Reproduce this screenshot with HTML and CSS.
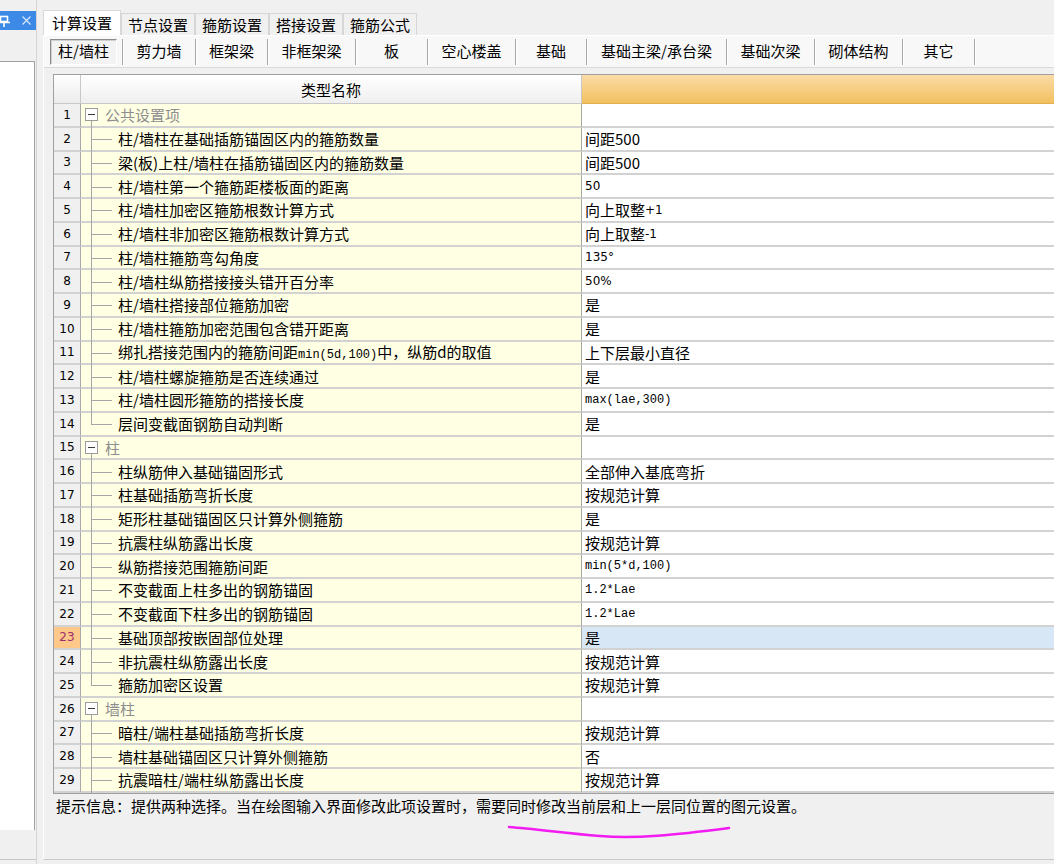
FILE: index.html
```html
<!DOCTYPE html>
<html lang="zh-CN">
<head>
<meta charset="utf-8">
<title>计算设置</title>
<link rel="stylesheet" href="styles.css">
</head>
<body>
<div class="app">
  <aside class="side">
    <div class="side-title">
      <svg class="pin" width="12" height="12" viewBox="0 0 12 12"><rect x="1.5" y="1.5" width="7" height="5" fill="none" stroke="#fff" stroke-width="1.6"/><path d="M0 7.5H11M5 7.5V12" stroke="#fff" stroke-width="1.6"/></svg>
      <svg class="close" width="9" height="9" viewBox="0 0 9 9"><path d="M0.5 0.5L8.5 8.5M8.5 0.5L0.5 8.5" stroke="#d6e6fb" stroke-width="1.2"/></svg>
    </div>
    <div class="side-gap"></div>
    <div class="side-list"></div>
    <div class="side-foot"></div>
  </aside>

  <main class="main">
    <nav class="tabs">
      <div class="tab active">计算设置</div>
      <div class="tab">节点设置</div>
      <div class="tab">箍筋设置</div>
      <div class="tab">搭接设置</div>
      <div class="tab">箍筋公式</div>
    </nav>

    <section class="panel">
      <div class="subbar">
        <div class="sub w75"><span class="pressed">柱/墙柱</span></div>
        <div class="sub w73">剪力墙</div>
        <div class="sub w72">框架梁</div>
        <div class="sub w88">非框架梁</div>
        <div class="sub w72">板</div>
        <div class="sub w88">空心楼盖</div>
        <div class="sub w71">基础</div>
        <div class="sub w140">基础主梁/承台梁</div>
        <div class="sub w88">基础次梁</div>
        <div class="sub w88">砌体结构</div>
        <div class="sub w72">其它</div>
      </div>

      <div class="grid">
        <div class="hrow">
          <div class="hnum"></div>
          <div class="hname">类型名称</div>
          <div class="hval"></div>
        </div>

        <div class="row"><div class="num">1</div><div class="name grp"><i class="exp"><b class="box"></b><b class="stem"></b></i><span>公共设置项</span></div><div class="val"></div></div>
        <div class="row"><div class="num">2</div><div class="name"><i class="twig"></i><span>柱/墙柱在基础插筋锚固区内的箍筋数量</span></div><div class="val">间距500</div></div>
        <div class="row"><div class="num">3</div><div class="name"><i class="twig"></i><span>梁(板)上柱/墙柱在插筋锚固区内的箍筋数量</span></div><div class="val">间距500</div></div>
        <div class="row"><div class="num">4</div><div class="name"><i class="twig"></i><span>柱/墙柱第一个箍筋距楼板面的距离</span></div><div class="val"><span class="sm">50</span></div></div>
        <div class="row"><div class="num">5</div><div class="name"><i class="twig"></i><span>柱/墙柱加密区箍筋根数计算方式</span></div><div class="val">向上取整<span class="sm">+1</span></div></div>
        <div class="row"><div class="num">6</div><div class="name"><i class="twig"></i><span>柱/墙柱非加密区箍筋根数计算方式</span></div><div class="val">向上取整<span class="sm">-1</span></div></div>
        <div class="row"><div class="num">7</div><div class="name"><i class="twig"></i><span>柱/墙柱箍筋弯勾角度</span></div><div class="val"><span class="sm">135°</span></div></div>
        <div class="row"><div class="num">8</div><div class="name"><i class="twig"></i><span>柱/墙柱纵筋搭接接头错开百分率</span></div><div class="val"><span class="sm">50%</span></div></div>
        <div class="row"><div class="num">9</div><div class="name"><i class="twig"></i><span>柱/墙柱搭接部位箍筋加密</span></div><div class="val">是</div></div>
        <div class="row"><div class="num">10</div><div class="name"><i class="twig"></i><span>柱/墙柱箍筋加密范围包含错开距离</span></div><div class="val">是</div></div>
        <div class="row"><div class="num">11</div><div class="name"><i class="twig"></i><span>绑扎搭接范围内的箍筋间距<span class="mono">min(5d,100)</span>中，纵筋d的取值</span></div><div class="val">上下层最小直径</div></div>
        <div class="row"><div class="num">12</div><div class="name"><i class="twig"></i><span>柱/墙柱螺旋箍筋是否连续通过</span></div><div class="val">是</div></div>
        <div class="row"><div class="num">13</div><div class="name"><i class="twig"></i><span>柱/墙柱圆形箍筋的搭接长度</span></div><div class="val"><span class="mono">max(lae,300)</span></div></div>
        <div class="row"><div class="num">14</div><div class="name"><i class="twig last"></i><span>层间变截面钢筋自动判断</span></div><div class="val">是</div></div>
        <div class="row"><div class="num">15</div><div class="name grp"><i class="exp"><b class="box"></b><b class="stem"></b></i><span>柱</span></div><div class="val"></div></div>
        <div class="row"><div class="num">16</div><div class="name"><i class="twig"></i><span>柱纵筋伸入基础锚固形式</span></div><div class="val">全部伸入基底弯折</div></div>
        <div class="row"><div class="num">17</div><div class="name"><i class="twig"></i><span>柱基础插筋弯折长度</span></div><div class="val">按规范计算</div></div>
        <div class="row"><div class="num">18</div><div class="name"><i class="twig"></i><span>矩形柱基础锚固区只计算外侧箍筋</span></div><div class="val">是</div></div>
        <div class="row"><div class="num">19</div><div class="name"><i class="twig"></i><span>抗震柱纵筋露出长度</span></div><div class="val">按规范计算</div></div>
        <div class="row"><div class="num">20</div><div class="name"><i class="twig"></i><span>纵筋搭接范围箍筋间距</span></div><div class="val"><span class="mono">min(5*d,100)</span></div></div>
        <div class="row"><div class="num">21</div><div class="name"><i class="twig"></i><span>不变截面上柱多出的钢筋锚固</span></div><div class="val"><span class="mono">1.2*Lae</span></div></div>
        <div class="row"><div class="num">22</div><div class="name"><i class="twig"></i><span>不变截面下柱多出的钢筋锚固</span></div><div class="val"><span class="mono">1.2*Lae</span></div></div>
        <div class="row sel"><div class="num">23</div><div class="name"><i class="twig"></i><span>基础顶部按嵌固部位处理</span></div><div class="val">是</div></div>
        <div class="row"><div class="num">24</div><div class="name"><i class="twig"></i><span>非抗震柱纵筋露出长度</span></div><div class="val">按规范计算</div></div>
        <div class="row"><div class="num">25</div><div class="name"><i class="twig last"></i><span>箍筋加密区设置</span></div><div class="val">按规范计算</div></div>
        <div class="row"><div class="num">26</div><div class="name grp"><i class="exp"><b class="box"></b><b class="stem"></b></i><span>墙柱</span></div><div class="val"></div></div>
        <div class="row"><div class="num">27</div><div class="name"><i class="twig"></i><span>暗柱/端柱基础插筋弯折长度</span></div><div class="val">按规范计算</div></div>
        <div class="row"><div class="num">28</div><div class="name"><i class="twig"></i><span>墙柱基础锚固区只计算外侧箍筋</span></div><div class="val">否</div></div>
        <div class="row"><div class="num">29</div><div class="name"><i class="twig"></i><span>抗震暗柱/端柱纵筋露出长度</span></div><div class="val">按规范计算</div></div>
      </div>

      <p class="hint">提示信息：提供两种选择。当在绘图输入界面修改此项设置时，需要同时修改当前层和上一层同位置的图元设置。</p>
    </section>
  </main>
</div>

<svg class="scribble" width="240" height="26" viewBox="0 0 240 26">
  <path d="M4 8 C 30 10, 60 14, 95 17 S 170 16, 224 9" fill="none" stroke="#f21cf2" stroke-width="2.6" stroke-linecap="round"/>
</svg>
</body>
</html>
```

FILE: styles.css
```css
* { box-sizing: border-box; }

html, body {
  margin: 0;
  padding: 0;
}

body {
  width: 1054px;
  height: 864px;
  overflow: hidden;
  position: relative;
  background: #f0f0f0;
  color: #000;
  font-family: "Noto Sans CJK SC", "Noto Sans", sans-serif;
  font-size: 15px;
}

.app {
  display: flex;
  height: 864px;
}

/* ---------- left docked panel ---------- */
.side {
  width: 37px;
  flex: none;
  display: flex;
  flex-direction: column;
  padding-top: 11px;
  border-right: 1px solid #d4d4d4;
}

.side-title {
  height: 19px;
  background: #3c8ae6;
  display: flex;
  align-items: center;
  justify-content: space-between;
  padding: 0 5px 0 0;
}

.pin { margin-left: -1px; }

.side-gap { height: 31px; }

.side-list {
  flex: 1;
  background: #fff;
  border-top: 1px solid #a0a0a0;
  border-right: 1px solid #a0a0a0;
  margin-right: 1px;
}

.side-foot {
  height: 30px;
  border-bottom: 1px solid #c4c4c4;
  margin-bottom: 4px;
}

/* ---------- main area ---------- */
.main {
  flex: 1;
  min-width: 0;
  margin-left: 6px;
  padding-top: 10px;
  display: flex;
  flex-direction: column;
  overflow: hidden;
}

.tabs {
  display: flex;
  align-items: flex-end;
  height: 25px;
  flex: none;
}

.tab {
  height: 22px;
  padding: 0 6px 1px;
  border: 1px solid #d6d6d6;
  border-bottom: none;
  background: #f0f0f0;
  display: flex;
  align-items: center;
  line-height: 1;
}

.tab.active {
  height: 25px;
  padding: 0 8px 2px;
  background: #fff;
  border-color: #d9d9d9;
}

.panel {
  flex: 1;
  display: flex;
  flex-direction: column;
  border-left: 1px solid #fff;
  border-top: 1px solid #fff;
  border-bottom: 1px solid #c8c8c8;
  margin-bottom: 4px;
  min-height: 0;
}

/* sub toolbar */
.subbar {
  height: 32px;
  flex: none;
  display: flex;
  align-items: center;
  padding-left: 4px;
  background: #f8f8f8;
  border-bottom: 1px solid #dadada;
}

.sub {
  height: 26px;
  padding-bottom: 2px;
  display: flex;
  align-items: center;
  justify-content: center;
  border-right: 1px solid #a8a8a8;
  box-shadow: 1px 0 0 #fff;
  line-height: 1;
  flex: none;
}

.sub:first-child { justify-content: flex-start; padding-bottom: 0; }

.w75 { width: 75px; }
.w73 { width: 73px; }
.w72 { width: 72px; }
.w71 { width: 71px; }
.w88 { width: 88px; }
.w140 { width: 140px; }

.pressed {
  width: 67px;
  height: 26px;
  margin-left: 2px;
  padding-bottom: 2px;
  display: flex;
  align-items: center;
  justify-content: center;
  border: 1px solid;
  border-color: #8c8c8c #fff #fff #8c8c8c;
  box-shadow: inset 1px 1px 0 #cfcfcf;
  background: #f3f3f3;
}

/* ---------- grid ---------- */
.grid {
  flex: none;
  width: 1100px;
  margin: 6px 0 0 9px;
  border: 1px solid #a0a0a0;
  border-right: none;
  background: #fff;
}

.hrow {
  display: flex;
  height: 29px;
}

.hnum {
  width: 27px;
  border-right: 1px solid #c8c8c8;
  border-bottom: 1px solid #c8c8c8;
  background: linear-gradient(#ffffff, #ececec);
}

.hname {
  width: 501px;
  border-right: 1px solid #c8c8c8;
  border-bottom: 1px solid #c8c8c8;
  background: linear-gradient(#ffffff, #efefef);
  display: flex;
  align-items: center;
  justify-content: center;
  line-height: 1;
}

.hval {
  flex: 1;
  background: linear-gradient(#fbdca6, #f2c05f);
  border-bottom: 1px solid #e0b050;
}

.row {
  display: flex;
  height: 23.75px;
}

.num,
.name,
.val {
  border-bottom: 2px solid #d2d2d2;
  display: flex;
  align-items: center;
  line-height: 1;
  white-space: nowrap;
}

.num {
  width: 27px;
  flex: none;
  justify-content: center;
  background: #f0f0f0;
  border-right: 1px solid #a8a8a8;
  font-family: "DejaVu Sans", "Liberation Sans", sans-serif;
  font-size: 12px;
}

.name {
  width: 501px;
  flex: none;
  background: #ffffe3;
  border-right: 1px solid #a8a8a8;
}

.val {
  flex: 1;
  background: #fff;
  padding-left: 3px;
}

.row.sel .num {
  background: #fdc88a;
  color: #9b2d6e;
}

.row.sel .val {
  background: #d8e7f6;
}

/* tree connectors */
.twig {
  align-self: stretch;
  margin-bottom: -2px;
  width: 27px;
  margin-left: 10px;
  flex: none;
  background:
    linear-gradient(#a6a6a6, #a6a6a6) 0 0 / 1px 100% no-repeat,
    linear-gradient(#a6a6a6, #a6a6a6) 0 50% / 21px 1px no-repeat;
}

.twig.last {
  background:
    linear-gradient(#a6a6a6, #a6a6a6) 0 0 / 1px 50% no-repeat,
    linear-gradient(#a6a6a6, #a6a6a6) 0 50% / 21px 1px no-repeat;
}

.exp {
  align-self: stretch;
  margin-bottom: -2px;
  width: 13px;
  margin-left: 4px;
  padding-top: 4px;
  flex: none;
  display: flex;
  flex-direction: column;
  align-items: center;
}

.box {
  width: 13px;
  height: 13px;
  flex: none;
  border: 1px solid #9c9c9c;
  background:
    linear-gradient(#3a3a3a, #3a3a3a) 50% 50% / 7px 1px no-repeat,
    #fff;
}

.stem {
  flex: 1;
  width: 1px;
  background: #a6a6a6;
}

.grp span {
  margin-left: 7px;
  color: #8e8e8e;
}

.mono {
  font-family: "Liberation Mono", "DejaVu Sans Mono", monospace;
  font-size: 12px;
}

.sm {
  font-family: "DejaVu Sans", "Liberation Sans", sans-serif;
  font-size: 12px;
}

/* ---------- hint ---------- */
.hint {
  margin: 0;
  padding: 1px 0 0 12px;
  line-height: 22px;
  white-space: nowrap;
}

/* hand-drawn annotation over the page */
.scribble {
  position: absolute;
  left: 505px;
  top: 819px;
}
```
